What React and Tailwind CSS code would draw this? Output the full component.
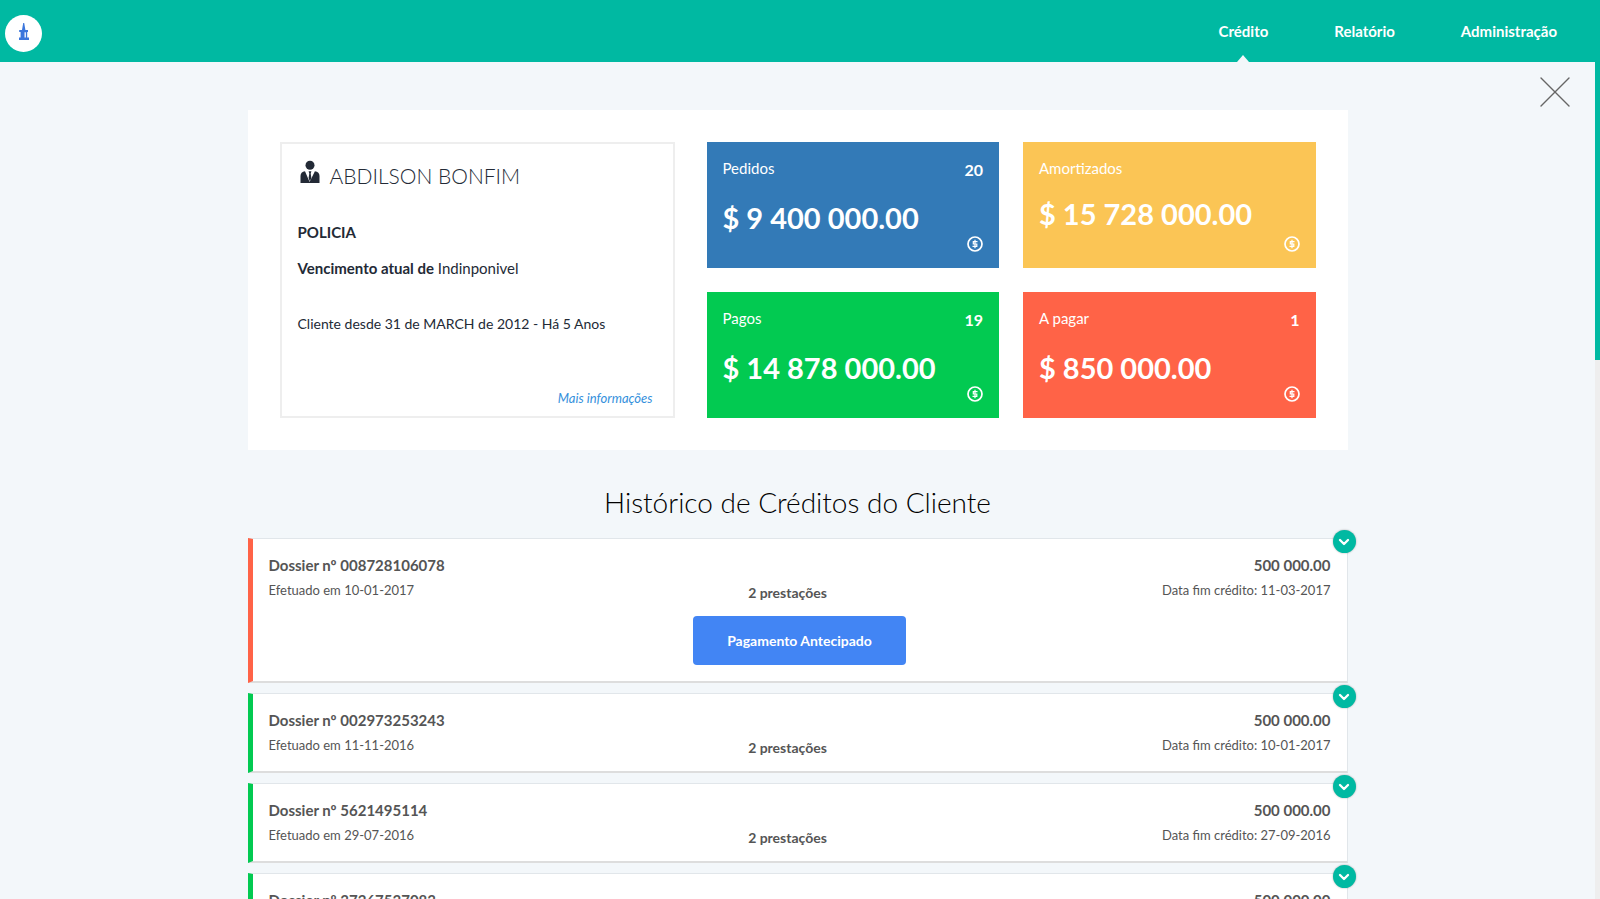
import { X, ChevronDown } from "lucide-react";

const navItems = [
  { label: "Crédito", active: true },
  { label: "Relatório", active: false },
  { label: "Administração", active: false },
];

const tiles = [
  { label: "Pedidos", amount: "$ 9 400 000.00", count: "20", color: "bg-[#337ab7]" },
  { label: "Amortizados", amount: "$ 15 728 000.00", count: "", color: "bg-[#fbc555]" },
  { label: "Pagos", amount: "$ 14 878 000.00", count: "19", color: "bg-[#02ca51]" },
  { label: "A pagar", amount: "$ 850 000.00", count: "1", color: "bg-[#ff6347]" },
];

const dossiers = [
  { number: "008728106078", start: "10-01-2017", end: "11-03-2017", open: true },
  { number: "002973253243", start: "11-11-2016", end: "10-01-2017", open: false },
  { number: "5621495114", start: "29-07-2016", end: "27-09-2016", open: false },
  { number: "37267537083", start: "16-05-2016", end: "15-07-2016", open: false },
];

function Logo() {
  return (
    <svg viewBox="0 0 37 37" className="size-[37px]" aria-hidden="true">
      <circle cx="18.5" cy="18.5" r="18.5" fill="#fff" />
      <path d="M18.2 8 H19.2 L20.4 15 H23 V17 H22.2 V22.6 H24 V25 H14 V22.6 H15.6 V17 H14.2 V15 H17 Z" fill="#3b76dc" />
      <path d="M20.2 17.2 V22.6" stroke="#fff" strokeWidth="1.3" />
    </svg>
  );
}

function Person() {
  return (
    <svg viewBox="0 0 20 24" className="h-6 w-5 shrink-0" fill="#232a36" aria-hidden="true">
      <circle cx="10" cy="5.2" r="4.5" />
      <path d="M5 11.2 L9.6 22 L14.9 11.2 Q19.5 12 19.5 16 V23 H0.5 V16 Q0.5 12 5 11.2 Z" />
      <path d="M6 10.8 L9.8 21 L14 10.8 L11.5 11.2 H8.3 Z" fill="#fff" />
      <path d="M8.6 11.2 H11.4 L10.7 13.4 L11.4 18 L9.9 21.4 L8.6 18 L9.3 13.4 Z" />
    </svg>
  );
}

function Coin() {
  return (
    <svg viewBox="0 0 16 16" className="size-4" fill="none" stroke="#fff" aria-hidden="true">
      <circle cx="8" cy="8" r="7" strokeWidth="1.7" />
      <path d="M10.5 5.6 H6.3 V8 H9.8 V10.4 H5.5 M8 3.8 V12.2" strokeWidth="1.2" />
    </svg>
  );
}

function Tile({ label, amount, count, color }) {
  return (
    <section className={`flex h-[126px] flex-col p-4 text-white ${color}`}>
      <div className="flex items-start justify-between">
        <h2 className="text-[15px] leading-5">{label}</h2>
        {count && <span className="text-base leading-6 font-bold">{count}</span>}
      </div>
      <div className="mt-[18px] text-[29px] leading-9 font-bold">{amount}</div>
      <div className="mt-auto flex justify-end">
        <Coin />
      </div>
    </section>
  );
}

function Dossier({ number, start, end, open }) {
  return (
    <li
      className={`relative border-t border-r border-b-2 border-l-[5px] border-t-[#e1e6ea] border-r-[#e1e6ea] border-b-[#dddddd] bg-white px-4 pt-3.5 pb-4 text-[#555555] ${
        open ? "border-l-[#ff6347]" : "border-l-[#02ca51]"
      }`}
    >
      <div className="grid h-[47px] grid-cols-[1fr_auto_1fr]">
        <div>
          <h3 className="text-[15px] leading-6 font-bold">Dossier nº {number}</h3>
          <p className="text-[13px] leading-[26px]">Efetuado em {start}</p>
        </div>
        <p className="self-end pr-6 text-sm leading-5 font-bold">2 prestações</p>
        <div className="text-right">
          <p className="text-[15px] leading-6 font-bold">500 000.00</p>
          <p className="text-[13px] leading-[26px]">Data fim crédito: {end}</p>
        </div>
      </div>
      {open && (
        <div className="mt-4 flex justify-center">
          <button className="h-[49px] rounded bg-[#4285f4] px-[34px] text-sm font-bold text-white">Pagamento Antecipado</button>
        </div>
      )}
      <button
        aria-label={`Expandir dossier ${number}`}
        className="absolute -top-[9px] -right-[9px] flex size-[23px] items-center justify-center rounded-full bg-[#00b9a2] text-white shadow-[0_0_2px_#00000055]"
      >
        <ChevronDown className="size-4" strokeWidth={3.5} />
      </button>
    </li>
  );
}

export default function App() {
  return (
    <div className="flex h-screen flex-col bg-[#f3f7fa] font-[Lato,sans-serif] text-[#232a36]">
      <header className="flex h-[62px] shrink-0 items-center justify-between bg-[#00b9a2] pl-[5px]">
        <a href="#inicio" aria-label="Início" className="mt-1">
          <Logo />
        </a>
        <nav className="flex h-full gap-[66px] pr-[43px]">
          {navItems.map((item) => (
            <a key={item.label} href="#menu" className="relative flex items-center text-[15px] font-bold text-white">
              {item.label}
              {item.active && (
                <svg viewBox="0 0 12 7" className="absolute bottom-0 left-1/2 h-[7px] w-3 -translate-x-1/2" aria-hidden="true">
                  <path d="M0 7 L6 0 L12 7 Z" fill="#f3f7fa" />
                </svg>
              )}
            </a>
          ))}
        </nav>
      </header>

      <div className="flex min-h-0 flex-1">
        <main className="relative flex-1 overflow-y-auto px-6 pt-12 [scrollbar-width:none]">
          <button aria-label="Fechar" className="absolute top-0.5 right-3 text-[#666666]">
            <X className="size-14" strokeWidth={0.6} />
          </button>

          <div className="mx-auto max-w-[1100px]">
            <div className="flex gap-8 bg-white p-8">
              <section className="flex w-[395px] shrink-0 flex-col border-2 border-[#eeeeee] px-4 pt-4 pb-2">
                <h1 className="flex gap-2.5 pl-0.5 text-[21px] leading-8 font-light">
                  <Person />
                  ABDILSON BONFIM
                </h1>
                <p className="mt-7 text-[15px] leading-6 font-bold">POLICIA</p>
                <p className="mt-3 text-[15px] leading-6">
                  <b>Vencimento atual de</b> Indinponivel
                </p>
                <p className="mt-8 text-sm leading-6">Cliente desde 31 de MARCH de 2012 - Há 5 Anos</p>
                <a href="#informacoes" className="mt-auto self-end pr-1 text-[13px] leading-5 text-[#3490dc] italic">
                  Mais informações
                </a>
              </section>
              <div className="grid flex-1 grid-cols-2 gap-6">
                {tiles.map((tile) => (
                  <Tile key={tile.label} {...tile} />
                ))}
              </div>
            </div>

            <h2 className="pt-8 pb-4 text-center text-[28px] leading-10 font-light text-black">Histórico de Créditos do Cliente</h2>

            <ul className="flex flex-col gap-2.5 pb-10">
              {dossiers.map((dossier) => (
                <Dossier key={dossier.number} {...dossier} />
              ))}
            </ul>
          </div>
        </main>
        <div className="w-[5px] bg-[#eeeeee]" aria-hidden="true">
          <div className="h-[35.6%] bg-[#00b9a2]" />
        </div>
      </div>
    </div>
  );
}
